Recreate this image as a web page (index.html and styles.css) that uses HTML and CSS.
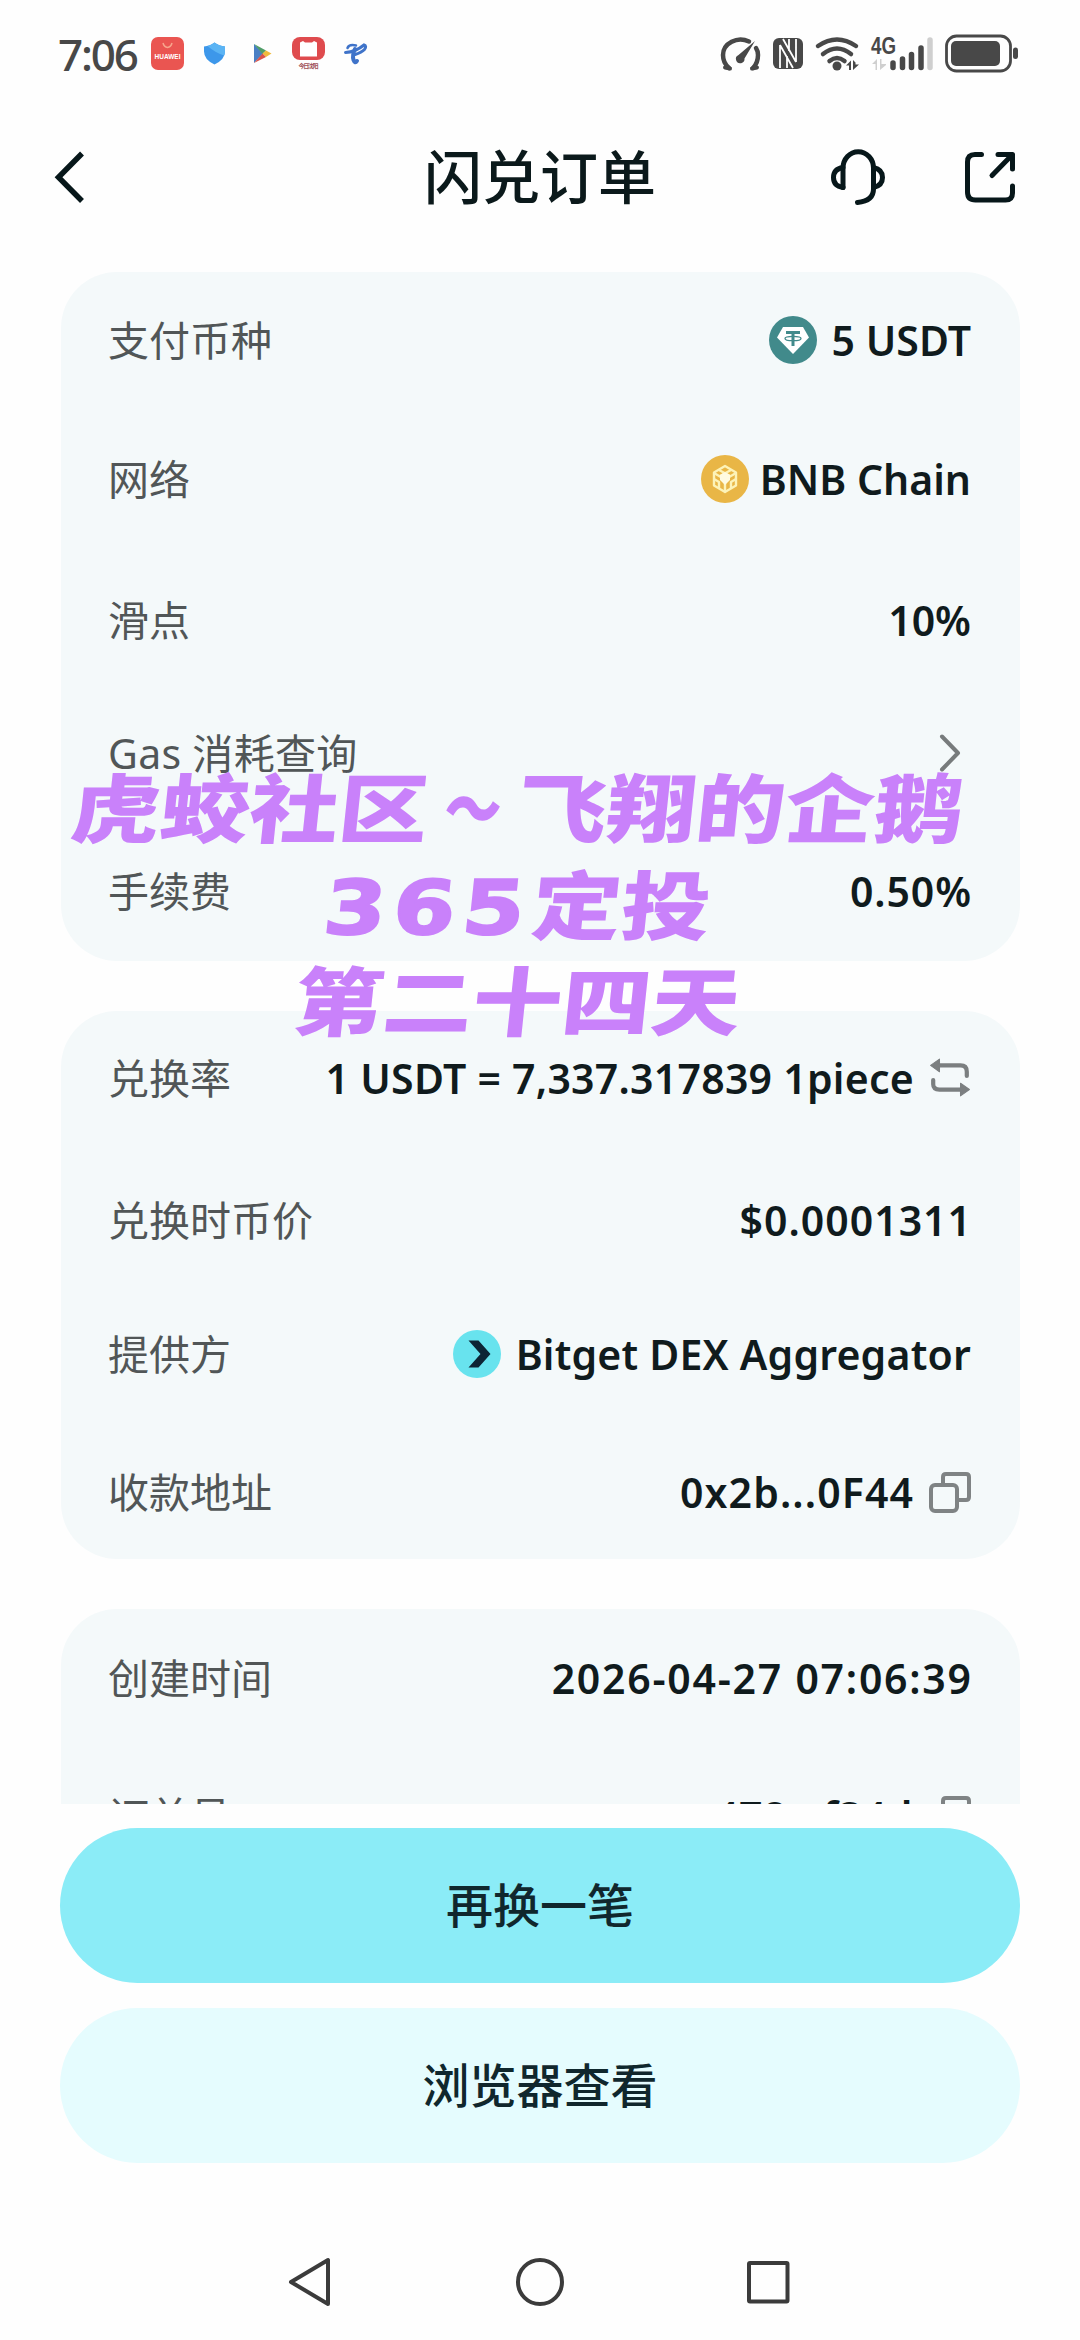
FILE: index.html
```html
<!DOCTYPE html>
<html lang="zh-CN">
<head>
<meta charset="utf-8">
<title>闪兑订单</title>
<link rel="stylesheet" href="styles.css">
</head>
<body>
<div class="screen">
  <div class="status">
    <span class="clock">7:06</span>
    <svg class="apps" viewBox="150 30 220 46">
      <rect x="151" y="37" width="33" height="33" rx="7" fill="#ea5551"/>
      <path d="M163 43q1 4 4.500 4.500q3.500-.5 4.500-4.500" fill="none" stroke="#f7a58c" stroke-width="1.500"/>
      <text x="154.500" y="58.500" class="huawei" textLength="26">HUAWEI</text>
      <path d="M204 46.500q6-.5 10.500-4q4.500 3.500 10.500 4v5q0 8-10.500 13q-10.500-5-10.500-13z" fill="#3d97ea"/>
      <path d="M214.500 42.500q4.500 3.500 10.500 4v5q0 2-1 4q-9-3-16.500-9.500q4-1 7-3.500z" fill="#5bb4f4"/>
      <path d="M254 44v19l9-9.500z" fill="#4a7fc4"/>
      <path d="M254 44l12 6.500-3.500 3.500z" fill="#4f9d68"/>
      <path d="M266 50.500l5.500 3-5.500 3.500-3.500-3.500z" fill="#f0bb3c"/>
      <path d="M254 63l8.500-9.500 3.500 3.500z" fill="#d9544b"/>
      <rect x="292" y="37" width="33" height="23" rx="8" fill="#df4b4e"/>
      <path d="M300 42.500l3-1.500 2 1.500h7l2-1.500 3 1.500v14h-17z" fill="#fff"/>
      <text x="298.500" y="67.500" class="tiny" textLength="20">今日沈阳</text>
      <g fill="none" stroke="#3f73c9" stroke-linecap="round">
        <path d="M345.500 52.500q10-.5 18.500-7.500q3 1 .5 4.500q-3 3-9.500 5" stroke-width="3"/>
        <path d="M356 45.500q-7-1.500-8.500 2.500" stroke-width="2.500"/>
        <path d="M355 49q-3 6-1.500 11q1.500 4 3.500 1" stroke-width="4"/>
      </g>
    </svg>
    <svg class="system" viewBox="718 30 304 46">
      <g fill="none" stroke="#484848" stroke-width="4.500" stroke-linecap="round">
        <path d="M729 68q-6-5-6-13a17.500 15.500 0 0 1 26-13.500M753 68q5-5 5-13q0-4-2-7"/>
        <path d="M725 67.500l5 1M757 67.500l-5 1" stroke-width="4"/>
      </g>
      <path d="M755 41l-10.500 17.500a4.300 4.300 0 1 1-6-3.500z" fill="#484848"/>
      <rect x="773" y="38" width="30" height="31" rx="6" fill="#484848"/>
      <path d="M780 68V45M796 39v23M783 39l13 23M780 45l13 23M787 56v12M789 39v12" fill="none" stroke="#fff" stroke-width="1.800"/>
      <g fill="none" stroke="#484848" stroke-width="4.500" stroke-linecap="round">
        <path d="M818 46q19-13 38 0M823 54q14-11 28 0M829.500 61q7.500-6 15 0"/>
      </g>
      <circle cx="837" cy="66" r="4.500" fill="#484848"/>
      <path d="M846 65.500l5-5v9.500h-2v-4.500zM853 60v10l6-5.500h-3.500v-2z" fill="#484848"/>
      <text x="871" y="53.500" class="net" textLength="25" lengthAdjust="spacingAndGlyphs">4G</text>
      <path d="M872 64l5-5v11h-1.500v-6zM880 59v11l6-5v-1h-4.500v-5z" fill="#cfcfcf"/>
      <g stroke="#484848" stroke-width="5.500" stroke-linecap="round">
        <path d="M893 63v4.500M902.500 59v8.500M911.500 54.500v13M921 48v19.500"/>
        <path d="M930 40v27.500" stroke="#cfcfcf"/>
      </g>
      <rect x="946.500" y="36" width="64" height="35" rx="10" fill="none" stroke="#484848" stroke-width="2.800"/>
      <rect x="951" y="41" width="49" height="25" rx="5" fill="#484848"/>
      <rect x="1013" y="47.500" width="5" height="11.500" rx="2.500" fill="#484848"/>
    </svg>
  </div>

  <header class="bar">
    <svg class="back" viewBox="54 150 32 54"><path d="M82 153.500L58.500 177.200L82 201" fill="none" stroke="#07171a" stroke-width="5.500"/></svg>
    <h1>闪兑订单</h1>
    <svg class="tools" viewBox="826 146 194 64">
      <g fill="none" stroke="#07171a" stroke-width="5" stroke-linecap="round" stroke-linejoin="round">
        <path d="M843 188.500V169a14.500 15.500 0 0 1 30.500 0V190q0 12-16 13.500"/>
        <path d="M843 168.500q-9.500 1.500-9.500 10t9.500 10M873.500 168.500q9 2 9 10t-9 10"/>
        <path d="M981.500 155.500H975q-7.500 0-7.500 7.500v30q0 8 8 8h30q7 0 7-7v-7M998 155.500h14.500V170M1011.500 156.500l-19.500 20"/>
      </g>
    </svg>
  </header>

  <main class="sheet">
    <section class="card first">
      <div class="row"><span class="label">支付币种</span><span class="value"><svg class="coin" viewBox="0 0 48 48"><circle cx="24" cy="24" r="24" fill="#418a8b"/><path d="M14 11h20l6 10.500L24 38 8 21.500z" fill="#fff"/><path d="M17 16.500h14M24 16.500V30" fill="none" stroke="#418a8b" stroke-width="3"/><ellipse cx="24" cy="22.500" rx="8" ry="2.200" fill="none" stroke="#418a8b" stroke-width="1.300"/></svg><b>5 USDT</b></span></div>
      <div class="row"><span class="label">网络</span><span class="value tight"><svg class="coin" viewBox="0 0 48 48"><circle cx="24" cy="24" r="24" fill="#e9b646"/><g fill="none" stroke="#fdf3b8" stroke-width="2.400" stroke-linejoin="round"><path d="M24 11l11 6.500v13L24 37l-11-6.500v-13z"/><path d="M13 18l11 6.500L35 18M24 24.500V37M18 15l11 6M30 15l-11 6M13 24l5 3v6M35 24l-5 3v6"/></g><path d="M19 20l5-3 5 3v5l-5 5-5-5z" fill="#fffbe0"/></svg><b>BNB Chain</b></span></div>
      <div class="row"><span class="label">滑点</span><span class="value"><b>10%</b></span></div>
      <div class="row"><span class="label gas">Gas 消耗查询</span><span class="value"><svg class="chev" viewBox="0 0 22 38"><path d="M3 2.500L19 19L3 35.500" fill="none" stroke="#777b7c" stroke-width="4" stroke-linecap="round" stroke-linejoin="round"/></svg></span></div>
      <div class="row"><span class="label">手续费</span><span class="value"><b class="v-fee">0.50%</b></span></div>
    </section>

    <section class="card second">
      <div class="row"><span class="label">兑换率</span><span class="value"><b class="v-rate">1 USDT = 7,337.317839 1piece</b><svg class="act" viewBox="0 0 40 40"><path d="M9 8h21q6 0 6 6v4M4 22v4q0 5 6 5h22" fill="none" stroke="#7b7f80" stroke-width="4" stroke-linecap="round"/><path d="M10 2v12L1.500 8zM30 25v12l8.500-6z" fill="#7b7f80" stroke="#7b7f80" stroke-linejoin="round"/></svg></span></div>
      <div class="row"><span class="label">兑换时币价</span><span class="value"><b class="v-price">$0.0001311</b></span></div>
      <div class="row"><span class="label">提供方</span><span class="value"><svg class="coin" viewBox="0 0 48 48"><circle cx="24" cy="24" r="24" fill="#68e3ee"/><path d="M15.500 10.500h10L37.500 24 25.500 37.500h-10L27.500 24z" fill="#0d2535"/></svg><b class="v-dex">Bitget DEX Aggregator</b></span></div>
      <div class="row"><span class="label">收款地址</span><span class="value"><b class="v-addr">0x2b...0F44</b><svg class="act" viewBox="0 0 42 42"><g fill="none" stroke="#7f8384" stroke-width="4"><path d="M14 13V6q0-3 3-3h20q3 0 3 3v20q0 3-3 3h-8"/><rect x="2" y="14" width="26" height="26" rx="4"/></g></svg></span></div>
    </section>

    <section class="card third">
      <div class="row"><span class="label">创建时间</span><span class="value"><b class="v-time">2026-04-27 07:06:39</b></span></div>
      <div class="row"><span class="label">订单号</span><span class="value"><b class="v-id">478...f34d</b><svg class="act" viewBox="0 0 42 42"><g fill="none" stroke="#7f8384" stroke-width="4"><path d="M14 13V6q0-3 3-3h20q3 0 3 3v20q0 3-3 3h-8"/><rect x="2" y="14" width="26" height="26" rx="4"/></g></svg></span></div>
    </section>
  </main>

  <div class="actions">
    <button class="btn primary">再换一笔</button>
    <button class="btn plain">浏览器查看</button>
  </div>

  <nav class="nav">
    <svg viewBox="0 0 52 52"><path d="M43 4v44L6 26z" /></svg>
    <svg viewBox="0 0 52 52"><circle cx="26" cy="26" r="22"/></svg>
    <svg viewBox="0 0 52 52"><rect x="7" y="7" width="38.500" height="38.500" rx="1"/></svg>
  </nav>

  <div class="mark">
    <p>虎蛟社区<span class="wave">～</span>飞翔的企鹅</p>
    <p><span class="num">365</span>定投</p>
    <p>第二十四天</p>
  </div>
</div>
</body>
</html>
```
FILE: styles.css
```css
* { box-sizing: border-box; margin: 0; padding: 0; }
body { background: #fefefe; }
.screen {
  position: relative; width: 1080px; height: 2340px; overflow: hidden;
  display: flex; flex-direction: column; background: #fefefe;
  font-family: "Noto Sans", "Noto Sans CJK SC", sans-serif; color: #0e1a1c;
}
svg { display: block; flex: none; overflow: visible; }
.status { display: flex; height: 106px; padding: 30px 58px 0 57px; }
.clock { width: 93px; font: 500 44px/48px "Noto Sans", sans-serif; letter-spacing: -2.200px; text-indent: 1px; color: #484848; white-space: nowrap; }
.apps { width: 220px; height: 46px; }
.system { width: 304px; height: 46px; margin-left: auto; }
.huawei { font: 700 6.500px "Liberation Sans", sans-serif; fill: #fff; }
.tiny { font: 700 6px "Noto Sans CJK SC", sans-serif; fill: #a05058; }
.net { font: 700 23px "Liberation Sans", sans-serif; fill: #484848; }
.bar { display: grid; grid-template-columns: 200px 1fr 194px; align-items: center; height: 142px; padding: 0 60px 0 54px; }
.back { width: 32px; height: 54px; }
.bar h1 { padding-bottom: 6px; font: 500 58px/80px "Noto Sans CJK SC", sans-serif; color: #0b191b; text-align: center; }
.tools { width: 194px; height: 64px; }
.sheet { display: flex; flex-direction: column; gap: 50px; height: 1556px; padding: 24px 60px 0 61px; overflow: hidden; }
.card { display: grid; align-content: start; align-items: start; flex: none; padding: 37px 49px 0 47px; border-radius: 56px; background: #f4f9fa; }
.first { height: 689px; grid-template-rows: 139px 141px 133px 138px 62px; }
.second { height: 548px; padding-top: 36px; grid-template-rows: 142px 134px 138px 62px; }
.third { height: 260px; padding-top: 38px; grid-template-rows: 138px 62px; }
.row { display: flex; justify-content: space-between; align-items: center; height: 62px; }
.label { font: 400 41px/62px "Noto Sans", "Noto Sans CJK SC", sans-serif; color: #515657; white-space: nowrap; }
.gas { letter-spacing: .3px; }
.value { display: flex; align-items: center; gap: 15px; }
.value.tight { gap: 11px; }
.value b { font: 600 41px/62px "Noto Sans", sans-serif; color: #101b1d; white-space: nowrap; }
.value .v-fee { letter-spacing: .9px; margin-right: -1px; }
.value .v-rate { letter-spacing: .25px; }
.value .v-price { letter-spacing: 1px; margin-right: -1px; }
.value .v-dex { letter-spacing: .2px; }
.value .v-addr { letter-spacing: 1.100px; }
.value .v-time { letter-spacing: 1.750px; margin-right: -1.750px; }
.value .v-id { letter-spacing: .6px; margin-right: 1px; }
.coin { width: 48px; height: 48px; }
.chev { width: 22px; height: 38px; margin-right: 10px; }
.act { width: 42px; height: 42px; }
.actions { display: flex; flex-direction: column; gap: 25px; padding: 24px 60px 0; }
.btn { height: 155px; padding-bottom: 6px; border: 0; border-radius: 78px; font: 500 47px/149px "Noto Sans CJK SC", sans-serif; color: #10272d; }
.primary { background: #8becf7; }
.plain { background: #e5fcfe; }
.nav { display: flex; justify-content: space-between; padding: 93px 286px 0 285px; }
.nav svg { width: 52px; height: 52px; fill: none; stroke: #3b3b3b; stroke-width: 4; stroke-linejoin: round; }
.mark { position: absolute; left: 0; top: 757px; width: 1036px; text-align: center; color: #c981fa; }
.mark p { height: 96.500px; font: 900 75px/96.500px "Noto Sans CJK SC", sans-serif; white-space: nowrap; transform: skewX(-6deg) scaleX(1.19); }
.num { font-family: "DejaVu Sans", sans-serif; letter-spacing: 6px; -webkit-text-stroke: 2px #c981fa; }
.wave { display: inline-block; transform: scaleX(.64); }
```
